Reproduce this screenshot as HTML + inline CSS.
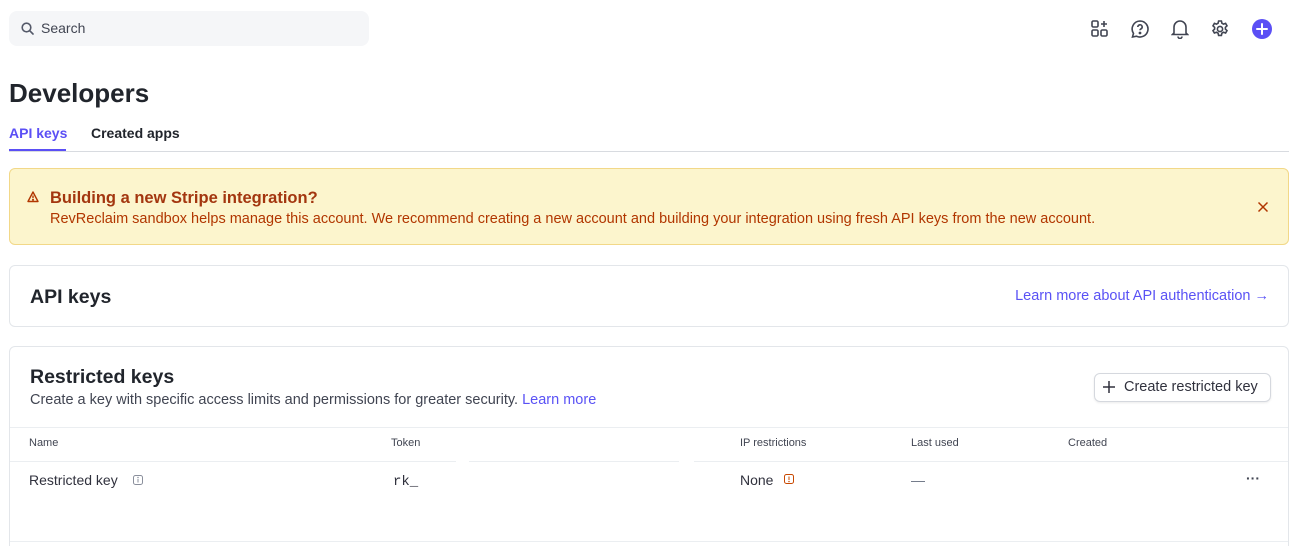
<!DOCTYPE html>
<html><head><meta charset="utf-8"><style>
*{box-sizing:border-box;margin:0;padding:0}
html,body{width:1297px;height:546px;overflow:hidden}
body{background:#fff;font-family:"Liberation Sans",Arial,sans-serif;color:#1a1f36;position:relative}
.abs{position:absolute}
.search{left:9px;top:11px;width:360px;height:35px;background:#f5f6f8;border-radius:8px}
.search span{position:absolute;left:32px;top:9px;font-size:14px;color:#414552}
h1{position:absolute;left:9px;top:78px;font-size:26px;font-weight:bold;color:#21252c}
.tab{position:absolute;top:125px;font-size:14px;font-weight:bold}
.banner{left:9px;top:168px;width:1280px;height:77px;background:#fcf5cd;border:1px solid #f2d888;border-radius:6px}
.card{left:9px;width:1280px;border:1px solid #e3e6ea;border-radius:6px;background:#fff}
.th{position:absolute;top:437px;font-size:11px;color:#414552}
.td{position:absolute;top:472px;font-size:14px;color:#30313d}
.link{color:#5a52f5}
</style></head><body>
<div class="abs search"><svg class="abs" style="left:12px;top:11px" width="13" height="13" viewBox="0 0 13 13"><circle cx="5.5" cy="5.5" r="4.3" fill="none" stroke="#545969" stroke-width="1.6"/><path d="M8.7 8.7L12 12" stroke="#545969" stroke-width="1.6" stroke-linecap="round"/></svg><span>Search</span></div>
<svg class="abs" style="left:1090px;top:19px" width="20" height="20" viewBox="0 0 20 20" fill="none" stroke="#414552" stroke-width="1.6"><rect x="2" y="2" width="6" height="6" rx="1.3"/><rect x="2" y="11" width="6" height="6" rx="1.3"/><rect x="11" y="11" width="6" height="6" rx="1.3"/><path d="M14 2v6M11 5h6"/></svg>
<svg class="abs" style="left:1130px;top:19px" width="20" height="20" viewBox="0 0 20 20" fill="none" stroke="#414552" stroke-width="1.6"><path d="M10 2a8 8 0 1 1-3.5 15.2L2.5 18l1-3.6A8 8 0 0 1 10 2z"/><path d="M7.8 8a2.2 2.2 0 1 1 3 2c-.6.3-.8.7-.8 1.3"/><circle cx="10" cy="14" r=".6" fill="#414552"/></svg>
<svg class="abs" style="left:1171px;top:19px" width="18" height="20" viewBox="0 0 18 20" fill="none" stroke="#414552" stroke-width="1.6"><path d="M3 14V8a6 6 0 0 1 12 0v6l1.5 1.5h-15z"/><path d="M7 17.5a2 2 0 0 0 4 0"/></svg>
<svg class="abs" style="left:1210px;top:19px" width="20" height="20" viewBox="0 0 20 20" fill="none" stroke="#414552" stroke-width="1.6"><circle cx="10" cy="10" r="2.6"/><path d="M8.6 2h2.8l.5 2.2 1.6.9 2.1-.7 1.4 2.4-1.6 1.5v1.8l1.6 1.5-1.4 2.4-2.1-.7-1.6.9-.5 2.2H8.6l-.5-2.2-1.6-.9-2.1.7-1.4-2.4 1.6-1.5V8.3L3 6.8l1.4-2.4 2.1.7 1.6-.9z"/></svg>
<svg class="abs" style="left:1252px;top:19px" width="20" height="20" viewBox="0 0 20 20"><circle cx="10" cy="10" r="10" fill="#5b4ff5"/><path d="M10 5v10M5 10h10" stroke="#fff" stroke-width="2" stroke-linecap="round"/></svg>
<h1>Developers</h1>
<div class="tab" style="left:9px;color:#5b4ff5">API keys</div>
<div class="tab" style="left:91px;color:#21252c">Created apps</div>
<div class="abs" style="left:9px;top:151px;width:1280px;height:1px;background:#d8dbe0"></div>
<div class="abs" style="left:9px;top:149px;width:57px;height:2px;background:#5b4ff5"></div>
<div class="abs banner">
<svg class="abs" style="left:17px;top:22px" width="12" height="12" viewBox="0 0 12 12" fill="none" stroke="#b13600" stroke-width="1.4"><path d="M6 1L11 10.5H1z" stroke-linejoin="round"/><path d="M6 4.5v2.5"/><circle cx="6" cy="8.7" r=".4" fill="#b13600"/></svg>
<div class="abs" style="left:40px;top:20px;font-size:16.5px;font-weight:bold;color:#a3360f">Building a new Stripe integration?</div>
<div class="abs" style="left:40px;top:42px;font-size:14.5px;color:#b13600;white-space:nowrap">RevReclaim sandbox helps manage this account. We recommend creating a new account and building your integration using fresh API keys from the new account.</div>
<svg class="abs" style="left:1247px;top:32px" width="12" height="12" viewBox="0 0 12 12" stroke="#b13600" stroke-width="1.5"><path d="M1.5 1.5l9 9M10.5 1.5l-9 9"/></svg>
</div>
<div class="abs card" style="top:265px;height:62px">
<div class="abs" style="left:20px;top:20px;font-size:19.5px;font-weight:bold;color:#21252c">API keys</div>
<div class="abs link" style="right:19px;top:22px;font-size:14.5px;white-space:nowrap">Learn more about API authentication →</div>
</div>
<div class="abs card" style="top:346px;height:220px">
<div class="abs" style="left:20px;top:19px;font-size:19.5px;font-weight:bold;color:#21252c">Restricted keys</div>
<div class="abs" style="left:20px;top:45px;font-size:14.5px;color:#414552;white-space:nowrap">Create a key with specific access limits and permissions for greater security. <span class="link">Learn more</span></div>
<div class="abs" style="left:1084px;top:26px;width:177px;height:29px;border:1px solid #d5d8de;border-radius:6px;box-shadow:0 1px 2px rgba(0,0,0,.08);font-size:14.5px;color:#30313d;padding:5px 0 0 29px;white-space:nowrap">Create restricted key</div>
<svg class="abs" style="left:1093px;top:34px" width="12" height="12" stroke="#30313d" stroke-width="1.5"><path d="M6 0v12M0 6h12"/></svg>
<div class="abs" style="left:0;top:80px;width:1278px;height:1px;background:#ebeef1"></div>
<div class="abs" style="left:0;top:114px;width:446px;height:1px;background:#ebeef1"></div>
<div class="abs" style="left:459px;top:114px;width:210px;height:1px;background:#ebeef1"></div>
<div class="abs" style="left:684px;top:114px;width:594px;height:1px;background:#ebeef1"></div>
<div class="abs" style="left:0;top:194px;width:1278px;height:1px;background:#ebeef1"></div>
</div>
<div class="th" style="left:29px">Name</div>
<div class="th" style="left:391px">Token</div>
<div class="th" style="left:740px">IP restrictions</div>
<div class="th" style="left:911px">Last used</div>
<div class="th" style="left:1068px">Created</div>
<div class="td" style="left:29px">Restricted key</div>
<svg class="abs" style="left:133px;top:475px" width="10" height="10" viewBox="0 0 10 10" fill="none" stroke="#8a8f9c"><rect x=".5" y=".5" width="9" height="9" rx="2"/><path d="M5 4v3.5"/><circle cx="5" cy="2.5" r=".3"/></svg>
<div class="td" style="left:393px;top:474px;font-family:'Liberation Mono',monospace">rk_</div>
<div class="td" style="left:740px">None</div>
<svg class="abs" style="left:784px;top:474px" width="10" height="10" viewBox="0 0 10 10" fill="none" stroke="#c84801"><rect x=".5" y=".5" width="9" height="9" rx="2"/><path d="M5 2.5v3.5"/><circle cx="5" cy="7.5" r=".3"/></svg>
<div class="td" style="left:911px;color:#6a7383">—</div>
<div class="td" style="left:1246px;top:470px;color:#414552;font-weight:bold">···</div>
</body></html>
